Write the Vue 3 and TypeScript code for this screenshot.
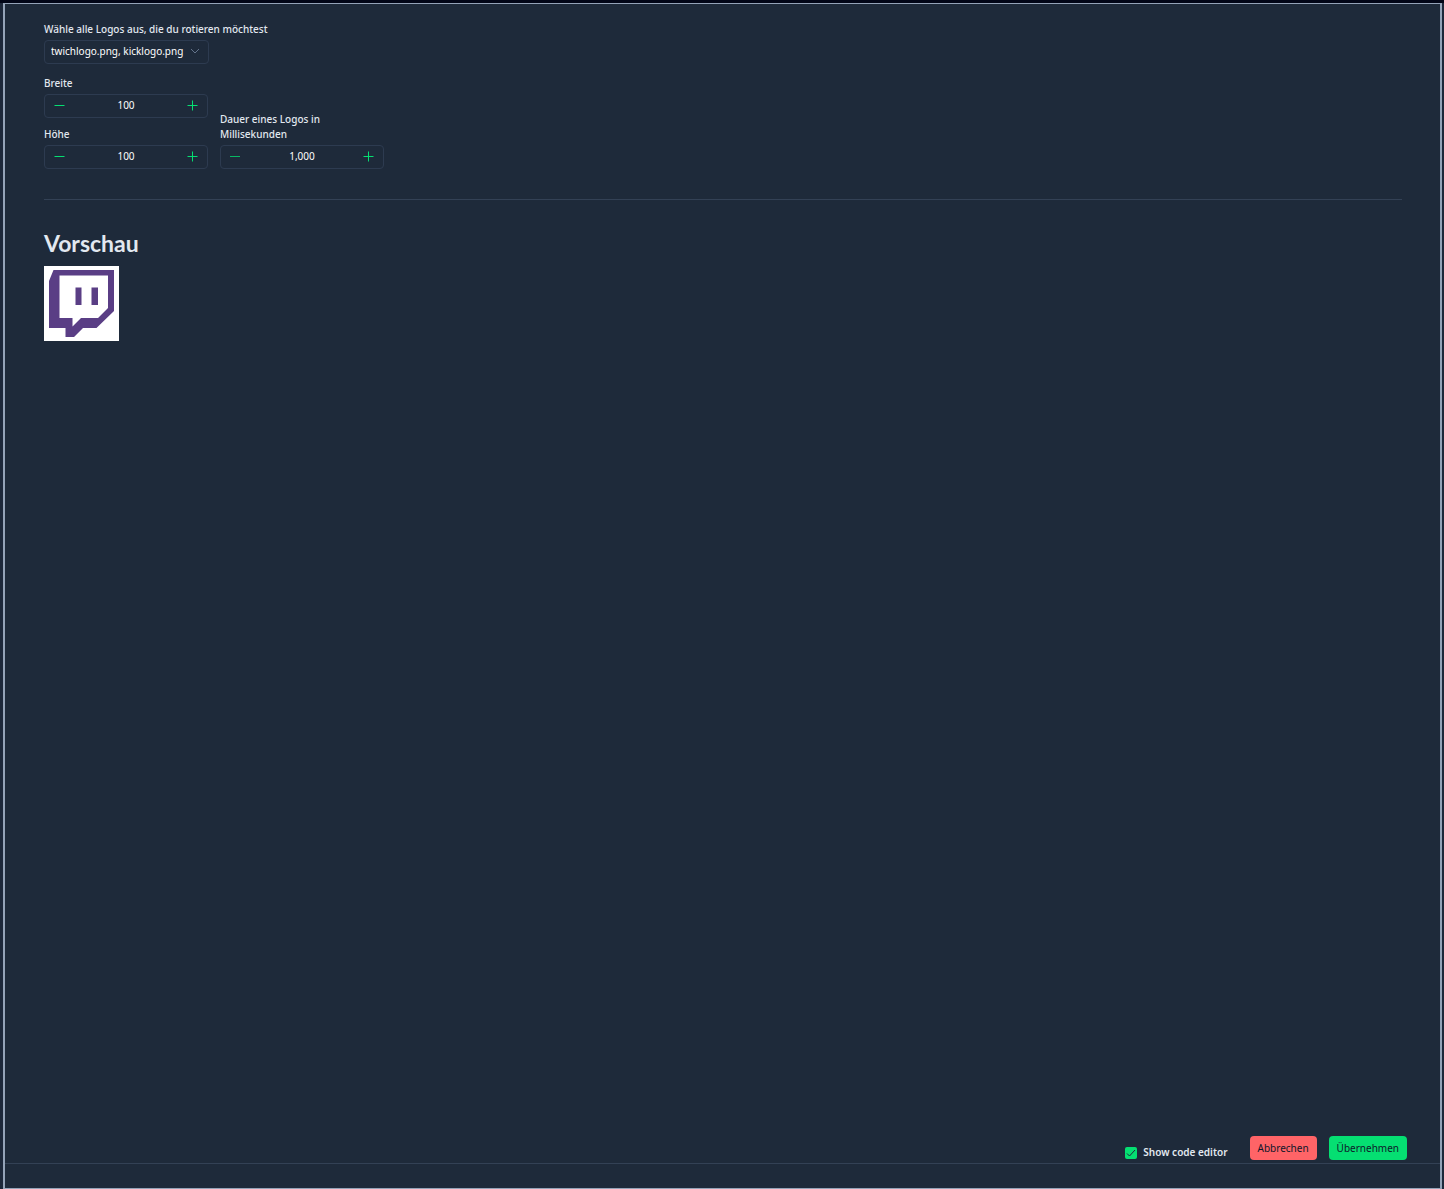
<script setup lang="ts">
import { ref } from 'vue'

const width = ref<number>(100)
const height = ref<number>(100)
const duration = ref<number>(1000)
const showEditor = ref<boolean>(true)
const selected = ref<string>('twichlogo.png, kicklogo.png')

const format = (value: number): string => value.toLocaleString('en-US')
const parse = (event: Event): number =>
  Number((event.target as HTMLInputElement).value.replace(/\D/g, ''))
</script>

<template>
  <div class="backdrop">
    <main class="dialog">
      <section class="content">
        <div class="field select-field">
          <label for="logos">Wähle alle Logos aus, die du rotieren möchtest</label>
          <div class="select-wrap">
            <select id="logos" v-model="selected">
              <option>twichlogo.png, kicklogo.png</option>
            </select>
            <svg class="chevron" viewBox="0 0 10 10" aria-hidden="true"><path d="M1 3l4 4 4-4" /></svg>
          </div>
        </div>

        <div class="row">
          <div class="sizes">
            <div class="field">
              <label for="breite">Breite</label>
              <div class="stepper">
                <button type="button" aria-label="Breite verringern" @click="width--">
                  <svg viewBox="0 0 11 11"><path d="M0.500 5.500h10" /></svg>
                </button>
                <input id="breite" type="text" :value="format(width)" @change="width = parse($event)" />
                <button type="button" aria-label="Breite erhöhen" @click="width++">
                  <svg viewBox="0 0 11 11"><path d="M0.500 5.500h10M5.500 0.500v10" /></svg>
                </button>
              </div>
            </div>
            <div class="field">
              <label for="hoehe">Höhe</label>
              <div class="stepper">
                <button type="button" aria-label="Höhe verringern" @click="height--">
                  <svg viewBox="0 0 11 11"><path d="M0.500 5.500h10" /></svg>
                </button>
                <input id="hoehe" type="text" :value="format(height)" @change="height = parse($event)" />
                <button type="button" aria-label="Höhe erhöhen" @click="height++">
                  <svg viewBox="0 0 11 11"><path d="M0.500 5.500h10M5.500 0.500v10" /></svg>
                </button>
              </div>
            </div>
          </div>
          <div class="field">
            <label for="dauer">Dauer eines Logos in<br />Millisekunden</label>
            <div class="stepper">
              <button type="button" aria-label="Dauer verringern" @click="duration--">
                <svg class="dim" viewBox="0 0 11 11"><path d="M0 5.500h10" /></svg>
              </button>
              <input id="dauer" type="text" :value="format(duration)" @change="duration = parse($event)" />
              <button type="button" aria-label="Dauer erhöhen" @click="duration++">
                <svg viewBox="0 0 11 11"><path d="M0.500 5.500h10M5.500 0.500v10" /></svg>
              </button>
            </div>
          </div>
        </div>

        <hr />

        <h2>Vorschau</h2>
        <svg class="preview" viewBox="0 0 75 75" role="img" aria-label="Twitch">
          <rect width="75" height="75" fill="#fff" />
          <path
            fill="#5a3e85"
            fill-rule="evenodd"
            d="M9.500 4H70V45L52.500 62H39L30 71H21.500V62H5V15ZM15.500 9.500V52H28.500V60.500L37 52H54L64 42V9.500ZM31.500 21.500H37.500V39H31.500ZM47.500 21.500H54V39H47.500Z"
          />
        </svg>
      </section>

      <footer class="actions">
        <label class="check">
          <span class="box">
            <input v-model="showEditor" type="checkbox" />
            <svg v-if="showEditor" viewBox="0 0 12 12" aria-hidden="true"><path d="M2 6.500l2.500 2.500 5.500-6" /></svg>
          </span>
          Show code editor
        </label>
        <button type="button" class="btn cancel">Abbrechen</button>
        <button type="button" class="btn apply">Übernehmen</button>
      </footer>
      <div class="tray"></div>
    </main>
  </div>
</template>

<style>
body {
  margin: 0;
  background: #1d283a;
}
</style>

<style scoped>
* {
  box-sizing: border-box;
}
.backdrop {
  display: flex;
  min-height: 100vh;
  padding: 0 2px 0 3px;
  border-top: 3px solid #020617;
  font-family: 'Noto Sans', 'Open Sans', sans-serif;
  font-size: 10px;
  line-height: 15px;
  color: #e2e8f0;
}
.dialog {
  flex: 1;
  display: flex;
  flex-direction: column;
  background: #1e2a3a;
  border: 1px solid #94a3b8;
  border-width: 1px 2px;
}
.content {
  flex: 1;
  padding: 18px 38px 0 39px;
}
.field {
  display: flex;
  flex-direction: column;
  align-items: flex-start;
  gap: 3px;
}
label {
  font-weight: 500;
}
.select-field {
  margin-bottom: 12px;
}
.select-wrap {
  position: relative;
  width: 165px;
}
select {
  display: block;
  width: 100%;
  height: 24px;
  padding: 0 24px 2px 6px;
  appearance: none;
  background: transparent;
  border: 1px solid #2d3b50;
  border-radius: 4px;
  color: #fff;
  font: inherit;
}
.chevron {
  position: absolute;
  right: 9px;
  top: 6px;
  width: 10px;
  height: 10px;
  fill: none;
  stroke: #64748b;
  pointer-events: none;
}
.row {
  display: flex;
  align-items: flex-end;
  gap: 12px;
}
.sizes {
  display: flex;
  flex-direction: column;
  gap: 9px;
}
.stepper {
  display: flex;
  width: 164px;
  height: 24px;
  border: 1px solid #2d3b50;
  border-radius: 4px;
}
.stepper button {
  display: flex;
  align-items: center;
  justify-content: center;
  width: 29px;
  padding: 0 0 1px;
  background: none;
  border: 0;
}
.stepper svg {
  width: 11px;
  height: 11px;
  fill: none;
  stroke: #05df72;
}
.stepper .dim {
  stroke: #08b663;
}
.stepper input {
  flex: 1;
  min-width: 0;
  padding: 0 0 1px;
  background: none;
  border: 0;
  color: #fff;
  font: inherit;
  text-align: center;
}
hr {
  height: 1px;
  margin: 30px 0;
  border: 0;
  background: #334155;
}
h2 {
  margin: 0 0 10px;
  font: 700 23px/26px Lato, sans-serif;
}
.preview {
  display: block;
  width: 75px;
  height: 75px;
}
.actions {
  display: flex;
  justify-content: flex-end;
  gap: 12px;
  padding: 0 33px 3px;
}
.check {
  display: flex;
  align-items: center;
  align-self: flex-end;
  gap: 6px;
  margin-right: 10px;
  font-weight: 600;
}
.box {
  position: relative;
  width: 12px;
  height: 12px;
}
.box input {
  display: block;
  width: 12px;
  height: 12px;
  margin: 0;
  appearance: none;
  background: #05df72;
  border-radius: 2px;
}
.box svg {
  position: absolute;
  inset: 0;
  fill: none;
  stroke: #1e293b;
  pointer-events: none;
}
.btn {
  height: 24px;
  padding: 0 8px;
  border: 0;
  border-radius: 4px;
  color: #0f172a;
  font: inherit;
}
.cancel {
  background: #ff6467;
}
.apply {
  background: #05df72;
}
.tray {
  height: 25px;
  border-top: 1px solid #334155;
}
</style>
